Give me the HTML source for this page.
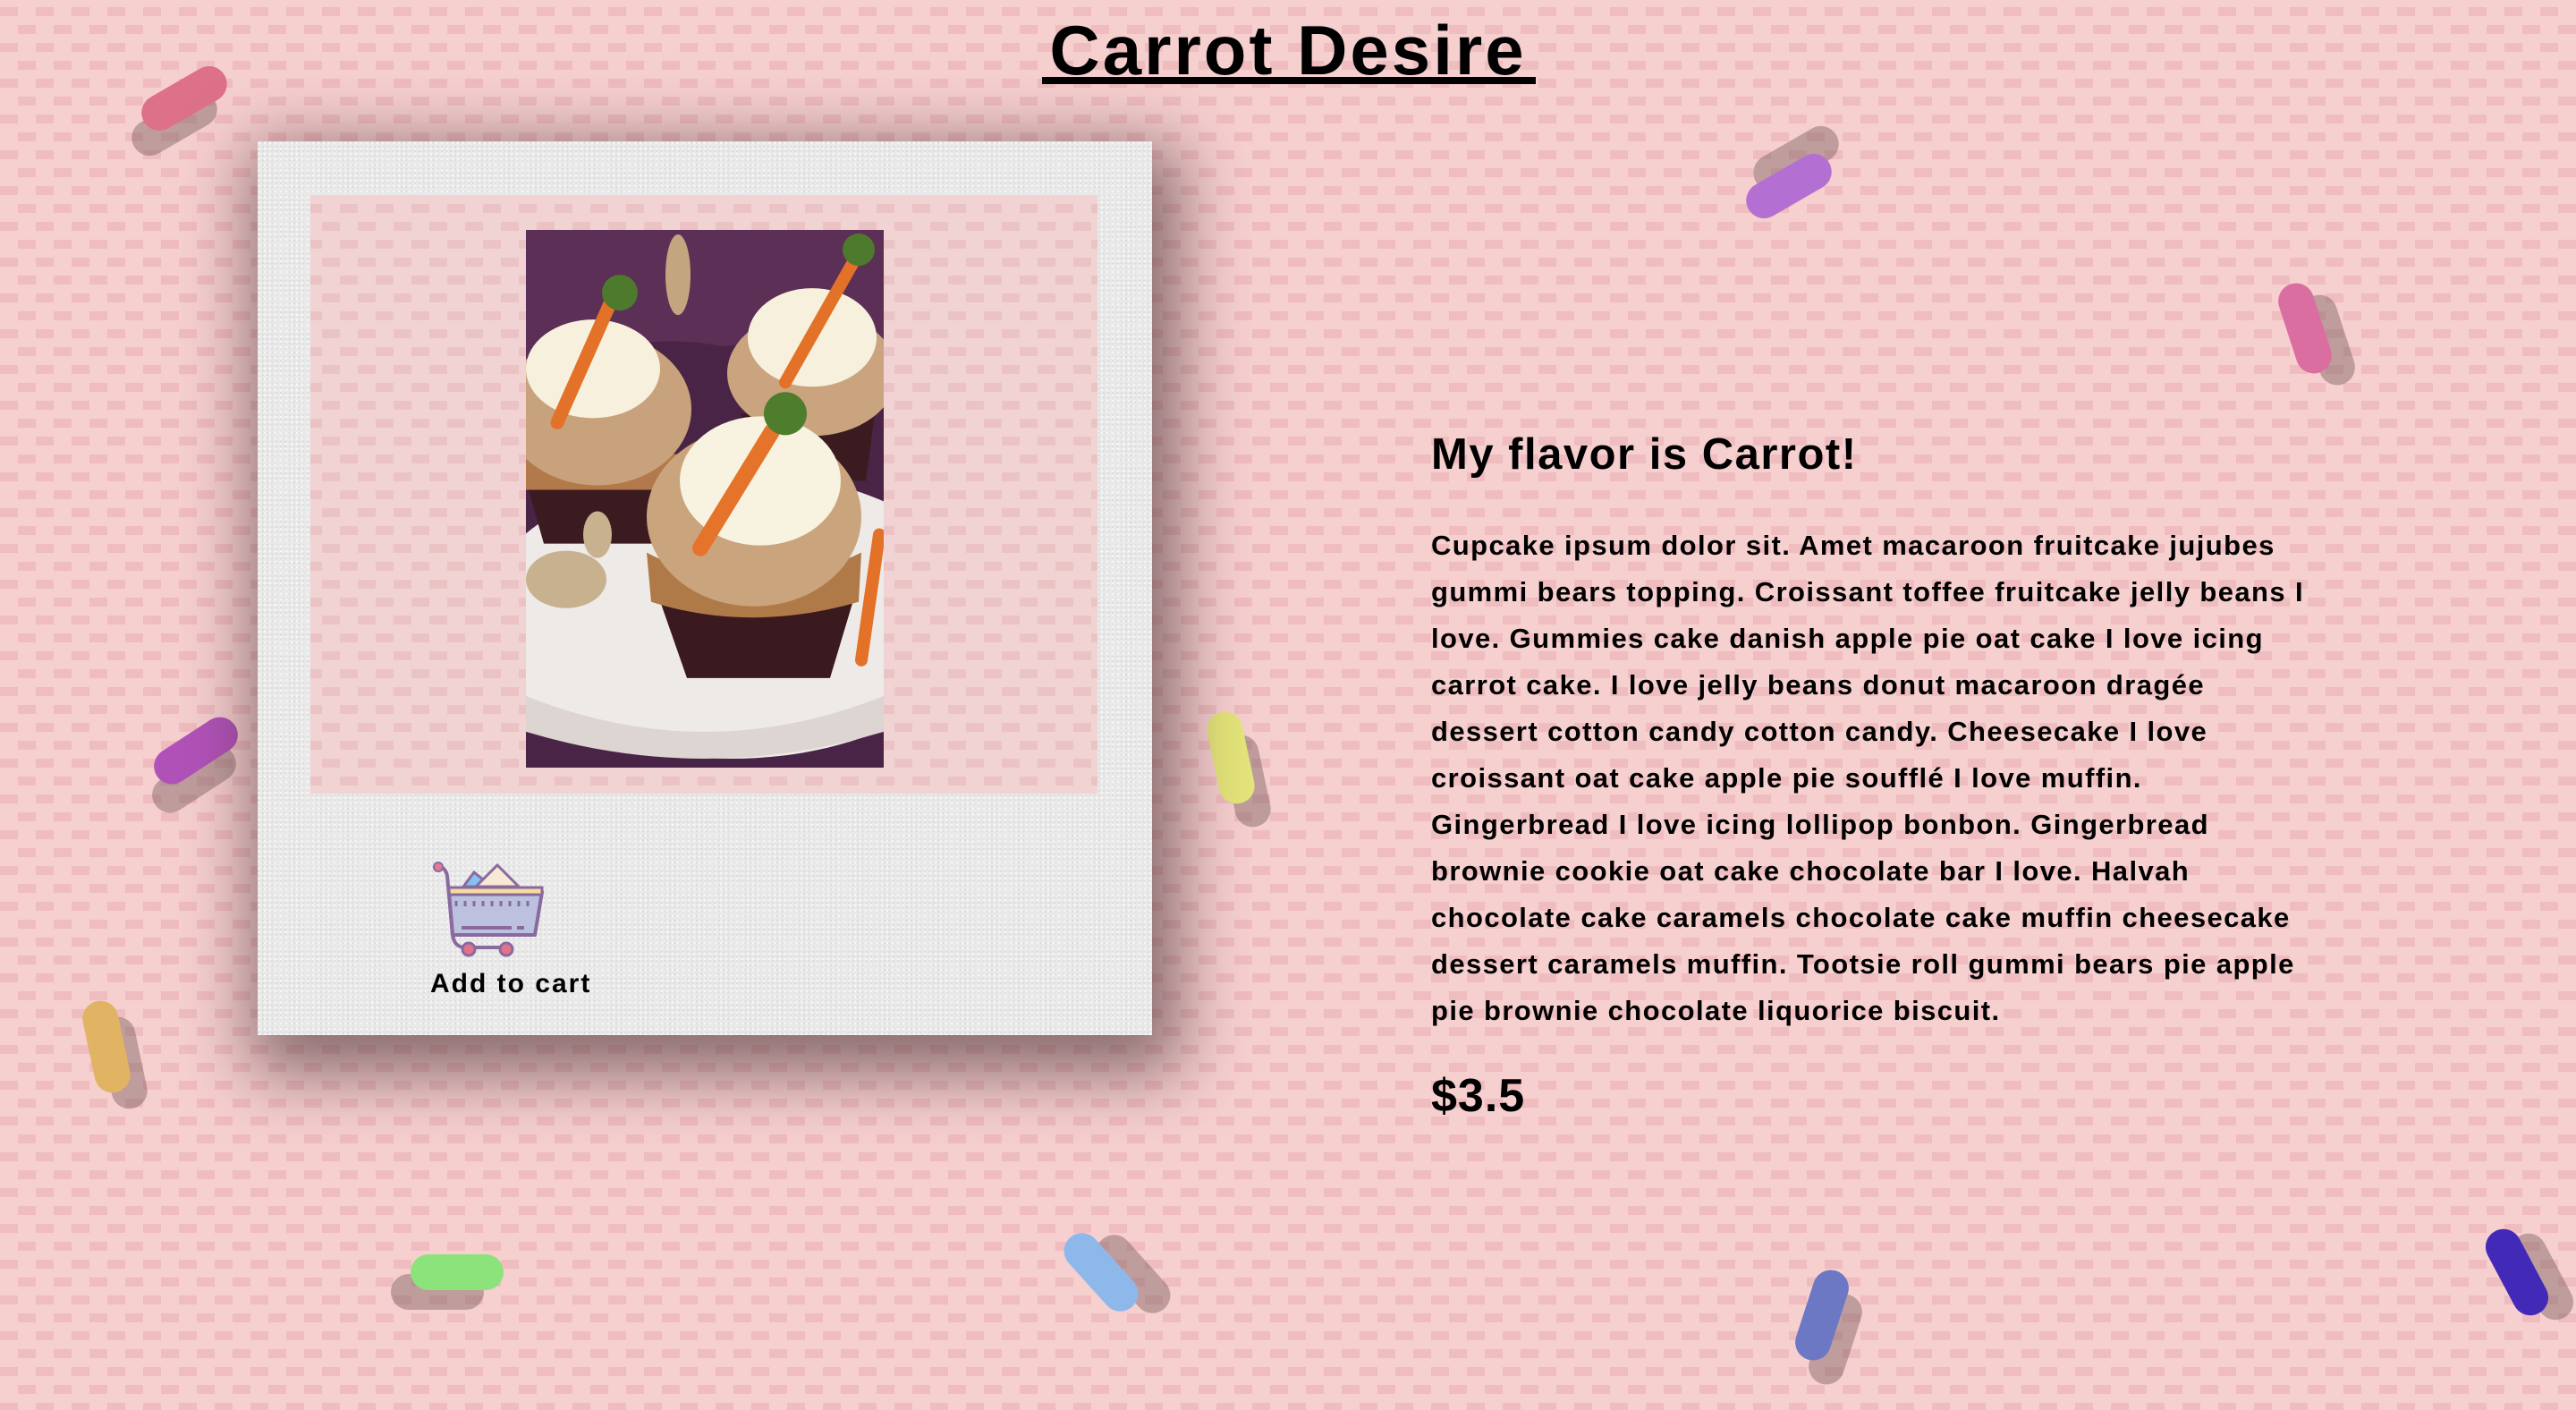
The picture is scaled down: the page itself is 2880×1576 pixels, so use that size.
<!DOCTYPE html>
<html><head><meta charset="utf-8"><style>
html,body{margin:0;padding:0;}
body{width:2880px;height:1576px;overflow:hidden;position:relative;font-family:"Liberation Sans",sans-serif;font-weight:bold;color:#000;background:#f6cfcf;}
.patsvg{position:absolute;left:0;top:0;}
h1{position:absolute;left:0;width:2880px;top:6px;margin:0;text-align:center;font-size:78px;line-height:100px;letter-spacing:3px;}
.ul{position:absolute;left:1165px;top:86px;width:552px;height:8px;background:#000;}
.card{position:absolute;left:288px;top:158px;width:1000px;height:999px;background:#e9e9e9;
box-shadow:12px 24px 70px 18px rgba(70,45,50,.62);
background-image:radial-gradient(circle at 2px 2px,#f6f6f6 1px,transparent 1.6px),radial-gradient(circle at 1px 1px,#dcdcdc 1px,transparent 1.6px);
background-size:6px 6px,5px 5px;}
.inner{position:absolute;left:59px;top:60px;width:880px;height:669px;overflow:hidden;}
.photo{position:absolute;left:300px;top:99px;width:400px;height:601px;}
.cart{position:absolute;left:192px;top:797px;}
.atc{position:absolute;left:193px;top:925px;font-size:30px;letter-spacing:2px;}
h2{position:absolute;left:1600px;top:478px;margin:0;font-size:49px;line-height:60px;letter-spacing:1.5px;}
p{position:absolute;left:1600px;top:584px;margin:0;font-size:31px;line-height:52px;white-space:nowrap;letter-spacing:1.4px}
.price{position:absolute;left:1600px;top:1195px;font-size:52px;line-height:60px;letter-spacing:1px;}
.s{position:absolute;width:104px;height:40px;border-radius:20px;}
.sh{background:rgba(125,95,95,.45);}
</style></head><body>
<svg class="patsvg" width="2880" height="1576">
 <defs><pattern id="pt" width="40" height="40" patternUnits="userSpaceOnUse" x="0" y="8">
  <rect x="0" y="0" width="20" height="10" fill="#efbcbf"/>
  <rect x="20" y="20" width="20" height="10" fill="#efbcbf"/>
 </pattern></defs>
 <rect width="2880" height="1576" fill="url(#pt)"/>
</svg>

<div class="s sh" style="left:143px;top:118px;transform:rotate(-30deg)"></div>
<div class="s" style="left:154px;top:90px;transform:rotate(-30deg);background:#dc7189"></div>
<div class="s sh" style="left:1956px;top:157px;transform:rotate(-30deg)"></div>
<div class="s" style="left:1948px;top:188px;transform:rotate(-30deg);background:#b46fd2"></div>
<div class="s sh" style="left:2551px;top:360px;transform:rotate(72deg)"></div>
<div class="s" style="left:2525px;top:347px;transform:rotate(72deg);background:#db6ea1"></div>
<div class="s sh" style="left:1111px;top:373px;transform:rotate(-30deg)"></div>
<div class="s" style="left:1118px;top:346px;transform:rotate(-30deg);background:#8570e0"></div>
<div class="s sh" style="left:165px;top:851px;transform:rotate(-33deg)"></div>
<div class="s" style="left:167px;top:819px;transform:rotate(-33deg);background:#b152b9"></div>
<div class="s sh" style="left:1342px;top:853px;transform:rotate(78deg)"></div>
<div class="s" style="left:1324px;top:827px;transform:rotate(78deg);background:#e4e57a"></div>
<div class="s sh" style="left:86px;top:1168px;transform:rotate(78deg)"></div>
<div class="s" style="left:67px;top:1150px;transform:rotate(78deg);background:#e0b463"></div>
<div class="s sh" style="left:437px;top:1424px;"></div>
<div class="s" style="left:459px;top:1402px;background:#8de37b"></div>
<div class="s sh" style="left:1215px;top:1404px;transform:rotate(48deg)"></div>
<div class="s" style="left:1179px;top:1402px;transform:rotate(48deg);background:#8fb8ea"></div>
<div class="s sh" style="left:2000px;top:1477px;transform:rotate(-72deg)"></div>
<div class="s" style="left:1985px;top:1450px;transform:rotate(-72deg);background:#6c78c4"></div>
<div class="s sh" style="left:2790px;top:1407px;transform:rotate(62deg)"></div>
<div class="s" style="left:2762px;top:1402px;transform:rotate(62deg);background:#4329b8"></div>

<h1>Carrot Desire</h1>
<div class="ul"></div>

<div class="card">
 <svg class="inner" width="880" height="669">
  <defs><pattern id="pt2" width="40" height="40" patternUnits="userSpaceOnUse" x="-347" y="-210">
   <rect x="0" y="0" width="20" height="10" fill="#ebc3c5"/>
   <rect x="20" y="20" width="20" height="10" fill="#ebc3c5"/>
  </pattern></defs>
  <rect width="880" height="669" fill="#f1d3d4"/>
  <rect width="880" height="669" fill="url(#pt2)"/>
 </svg>
 <svg class="photo" viewBox="0 0 400 600" preserveAspectRatio="none">
  <rect width="400" height="600" fill="#4a2446"/>
  <path d="M0 0H400V150Q300 120 220 130Q120 110 0 160Z" fill="#5c2f57"/>
  <ellipse cx="230" cy="430" rx="280" ry="160" fill="#eeeae8"/>
  <path d="M0 520Q200 600 400 520V560Q200 620 0 560Z" fill="#ddd5d2"/>
  <path d="M240 205L390 205L380 280L255 280Z" fill="#3b1b20"/>
  <ellipse cx="320" cy="160" rx="95" ry="70" fill="#c9a47e"/>
  <ellipse cx="320" cy="120" rx="72" ry="55" fill="#f7f0dc"/>
  <path d="M290 170L375 20" stroke="#e37228" stroke-width="14" stroke-linecap="round"/>
  <circle cx="372" cy="22" r="18" fill="#4d7a2c"/>
  <path d="M0 280L165 280L150 350L20 350Z" fill="#3b1b20"/>
  <rect x="0" y="250" width="170" height="40" fill="#b27a4a"/>
  <ellipse cx="80" cy="200" rx="105" ry="85" fill="#c8a27c"/>
  <ellipse cx="75" cy="155" rx="75" ry="55" fill="#f7f0dc"/>
  <path d="M35 215L95 80" stroke="#e37228" stroke-width="15" stroke-linecap="round"/>
  <circle cx="105" cy="70" r="20" fill="#4d7a2c"/>
  <ellipse cx="170" cy="50" rx="14" ry="45" fill="#c3a57f"/>
  <ellipse cx="45" cy="390" rx="45" ry="32" fill="#c8b18e"/>
  <ellipse cx="80" cy="340" rx="16" ry="26" fill="#c8b18e"/>
  <path d="M145 400L370 400L340 500L180 500Z" fill="#3a1a1e"/>
  <path d="M135 360Q250 420 375 360L372 415Q250 450 140 415Z" fill="#b07a48"/>
  <ellipse cx="255" cy="320" rx="120" ry="100" fill="#c9a47d"/>
  <ellipse cx="262" cy="280" rx="90" ry="72" fill="#f8f2e0"/>
  <path d="M195 355L275 225" stroke="#e5732a" stroke-width="18" stroke-linecap="round"/>
  <circle cx="290" cy="205" r="24" fill="#4e7d2e"/>
  <path d="M375 480L395 340" stroke="#e37228" stroke-width="14" stroke-linecap="round"/>
 </svg>
 <svg class="cart" width="130" height="122" viewBox="0 0 130 122">
  <path d="M38 36L50 20L60 28L56 36Z" fill="#86c1f0" stroke="#8a6a9e" stroke-width="3"/>
  <path d="M52 36L76 12L100 36Z" fill="#f7ead4" stroke="#8a6a9e" stroke-width="3"/>
  <path d="M22 42H126L118 90H26Z" fill="#bcc1e0" stroke="#8a6a9e" stroke-width="4" stroke-linejoin="round"/>
  <rect x="22" y="37" width="104" height="8" fill="#f4dba0" stroke="#8a6a9e" stroke-width="3"/>
  <path d="M30 52V58M40 52V58M50 52V58M60 52V58M70 52V58M80 52V58M90 52V58M100 52V58M110 52V58" stroke="#8a6a9e" stroke-width="3"/>
  <path d="M10 14Q18 14 20 24L26 90Q28 104 40 104H90" fill="none" stroke="#8a6a9e" stroke-width="4"/>
  <circle cx="10" cy="14" r="5" fill="#e67a93" stroke="#8a6a9e" stroke-width="2"/>
  <path d="M36 82H92M98 82H106" stroke="#8a6a9e" stroke-width="4"/>
  <circle cx="44" cy="106" r="7" fill="#e5708a" stroke="#8a6a9e" stroke-width="3"/>
  <circle cx="86" cy="106" r="7" fill="#e5708a" stroke="#8a6a9e" stroke-width="3"/>
 </svg>
 <div class="atc">Add to cart</div>
</div>

<h2>My flavor is Carrot!</h2>
<p>Cupcake ipsum dolor sit. Amet macaroon fruitcake jujubes<br>gummi bears topping. Croissant toffee fruitcake jelly beans I<br>love. Gummies cake danish apple pie oat cake I love icing<br>carrot cake. I love jelly beans donut macaroon dragée<br>dessert cotton candy cotton candy. Cheesecake I love<br>croissant oat cake apple pie soufflé I love muffin.<br>Gingerbread I love icing lollipop bonbon. Gingerbread<br>brownie cookie oat cake chocolate bar I love. Halvah<br>chocolate cake caramels chocolate cake muffin cheesecake<br>dessert caramels muffin. Tootsie roll gummi bears pie apple<br>pie brownie chocolate liquorice biscuit.</p>
<div class="price">$3.5</div>
</body></html>
